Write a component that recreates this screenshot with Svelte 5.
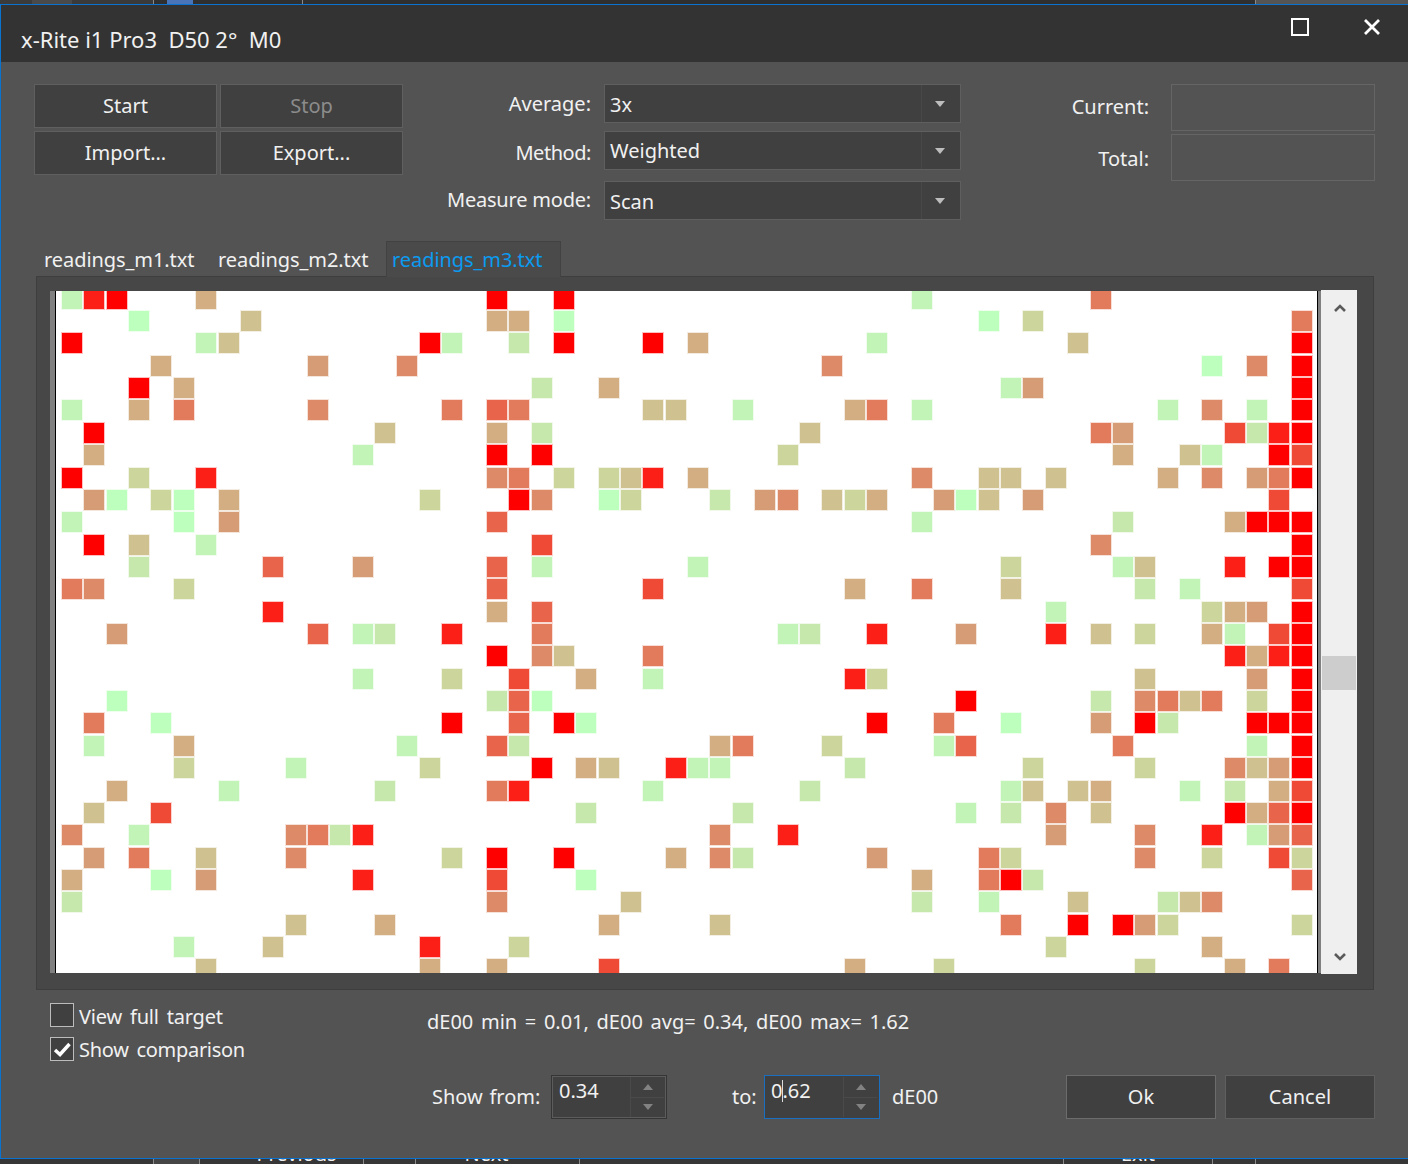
<script>
  const data = [
    "0L 1S 2R 6T 19R 22R 38L 46O",
    "3B 8K 19T 20T 22B 41B 43G 55O",
    "0R 6L 7K 16R 17L 20H 22R 26R 28T 36L 45K 55R",
    "4T 11D 15P 34P 51B 53P 55R",
    "3R 5T 21H 24T 42L 43D 55R",
    "0L 3T 5O 11P 17O 19F 20O 26K 27K 30L 35T 36O 38L 49L 51P 53L 55R",
    "1R 14K 19T 21H 33K 46O 47D 52E 53H 54S 55R",
    "1T 13L 19R 21R 32G 47T 50K 51L 54R 55E",
    "0R 3G 6S 19P 20O 22G 24G 25K 26S 28T 38P 41K 42K 44K 49T 51P 53D 54O 55R",
    "1D 2B 4G 5B 7T 16G 20R 21P 24B 25G 29H 31D 32P 34K 35G 36T 39D 40B 41K 43D 54E",
    "0L 5B 7D 19F 38L 47H 52T 53R 54R 55R",
    "1R 3K 6L 21E 46P 55R",
    "3H 9F 13D 19F 21L 28L 42G 47L 48K 52S 54R 55R",
    "0O 1P 5G 19F 26E 35T 38O 42K 48H 50L 55E",
    "9S 19T 21F 44L 51G 52T 53D 55R",
    "2D 11F 13L 14H 17S 21O 32L 33H 36S 40D 44S 46K 48G 51T 52L 54E 55R",
    "19R 21P 22K 26O 52S 53T 54S 55R",
    "13L 17G 20E 23T 26L 35S 36G 48K 53D 55R",
    "2B 19H 20F 21B 40R 46H 48P 49O 50K 51O 53G 55R",
    "1O 4B 17R 20F 22R 23B 36R 39O 42B 46D 48R 49H 53R 54R 55R",
    "1L 5T 15L 19F 20H 29T 30O 34G 39L 40F 47O 53L 55R",
    "5G 10L 16G 21R 23T 24K 27S 28L 29L 35H 43G 48G 52P 53K 54D 55R",
    "2T 7L 14H 19O 20S 26L 33H 42L 43K 45K 46T 50L 52H 54T 55E",
    "1K 4E 23H 30H 40L 42H 44P 46K 52R 53T 54F 55R",
    "0P 3L 10P 11O 12H 13S 29P 32S 44D 48P 51S 53L 54D 55F",
    "1D 3O 6K 10P 17G 19R 22R 27T 29P 30H 36D 41O 42G 48P 51G 54E 55G",
    "0T 4B 6D 13S 19E 23B 38T 41O 42R 43H 55F",
    "0H 19P 25K 38H 41L 45K 49H 50K 51P",
    "10K 14T 24T 29K 42O 45R 47R 48D 49G 55G",
    "5L 9K 16S 20G 44G 51T",
    "6K 16T 19T 24E 35T 39G 48G 52T 54O"
  ];
  const cells = data.flatMap((row, r) =>
    row.split(" ").map((t) => ({ r: r + 1, c: parseInt(t) + 1, k: t.slice(-1) }))
  );
</script>

<div class="screen">
  <div class="strip top-strip">
    <i class="a"></i><i class="b"></i><i class="c"></i><i class="sep"></i><i class="d"></i><i class="blue"></i><i class="e"></i><i class="sep"></i><i class="f"></i><i class="sep"></i><i class="g"></i>
  </div>

  <div class="dialog">
    <header class="title">
      <span class="title-text">x-Rite i1 Pro3&nbsp; D50 2°&nbsp; M0</span>
      <svg class="win max" width="18" height="18" viewBox="0 0 18 18"><rect x="1" y="1" width="16" height="16" fill="none" stroke="#fff" stroke-width="2"/></svg>
      <svg class="win close" width="16" height="16" viewBox="0 0 16 16"><path d="M1 1L15 15M15 1L1 15" stroke="#fff" stroke-width="2.8" fill="none"/></svg>
    </header>

    <section class="top">
      <div class="btns">
        <button>Start</button>
        <button class="off">Stop</button>
        <button>Import...</button>
        <button>Export...</button>
      </div>
      <div class="fields">
        <label class="f1">Average:</label>
        <div class="combo f1"><span class="low">3x</span><b class="drop"><em></em></b></div>
        <label class="f2">Method:</label>
        <div class="combo f2"><span>Weighted</span><b class="drop"><em></em></b></div>
        <label class="f3">Measure mode:</label>
        <div class="combo f3"><span class="low">Scan</span><b class="drop"><em></em></b></div>
      </div>
      <div class="readouts">
        <label class="cur">Current:</label><div class="box"></div>
        <label class="tot">Total:</label><div class="box"></div>
      </div>
    </section>

    <nav class="tabs">
      <span class="tab">readings_m1.txt</span>
      <span class="tab">readings_m2.txt</span>
      <span class="tab active">readings_m3.txt</span>
    </nav>

    <section class="pane">
      <div class="gutter"></div>
      <div class="plot">
        {#each cells as cell}
          <div class="cell {cell.k}" style="grid-row:{cell.r};grid-column:{cell.c}"></div>
        {/each}
      </div>
      <div class="gutter right"></div>
      <div class="scroll">
        <svg class="chev" width="12" height="8" viewBox="0 0 12 8"><path d="M1 7L6 2L11 7" fill="none" stroke="#5a5a5a" stroke-width="2.6"/></svg>
        <div class="thumb"></div>
        <svg class="chev" width="12" height="8" viewBox="0 0 12 8"><path d="M1 1L6 6L11 1" fill="none" stroke="#5a5a5a" stroke-width="2.6"/></svg>
      </div>
    </section>

    <section class="footer">
      <div class="checks">
        <div class="check"><span class="tick"></span><span class="ck first">View full target</span></div>
        <div class="check"><span class="tick"><svg width="22" height="22" viewBox="0 0 22 22"><path d="M4 12L9 16.5L18.5 6" fill="none" stroke="#fff" stroke-width="3.4"/></svg></span><span class="ck">Show comparison</span></div>
      </div>
      <div class="right-col">
        <div class="stats">dE00 min = 0.01, dE00 avg= 0.34, dE00 max= 1.62</div>
        <div class="controls">
          <span class="show">Show from:</span>
          <div class="spin"><span class="val">0.34</span><div class="updown"><b><em class="up"></em></b><b><em class="dn"></em></b></div></div>
          <span class="to">to:</span>
          <div class="spin focus"><span class="val">0<i class="caret"></i>.62</span><div class="updown"><b><em class="up"></em></b><b><em class="dn"></em></b></div></div>
          <span class="unit">dE00</span>
          <button class="act ok">Ok</button>
          <button class="act">Cancel</button>
        </div>
      </div>
    </section>
  </div>

  <div class="strip bottom-strip">
    <i class="s1"></i><i class="sep"></i><i class="s2"></i><i class="sep"></i>
    <span class="prev">Previous</span><i class="sep"></i><i class="s3"></i><i class="sep"></i>
    <span class="next">Next</span><i class="sep"></i><i class="s4"></i><i class="sep"></i>
    <span class="exit">Exit</span><i class="sep"></i><i class="s5"></i><i class="sep"></i>
  </div>
</div>

<style>
  :global(body) { margin: 0; background: #333; }
  .screen {
    width: 1408px; height: 1164px; display: flex; flex-direction: column; overflow: hidden;
    font-family: "Noto Sans", "Open Sans", sans-serif; font-size: 20px; color: #f1f1f1;
  }
  .strip { display: flex; flex: none; overflow: hidden; background: #2f2f2f; }
  .strip i { display: block; flex: none; }
  .strip .sep { width: 1px; background: #8a8a8a; }
  .top-strip { height: 4px; }
  .a { width: 32px; background: #3b3b3b; }
  .b { width: 40px; background: #4a4a4a; }
  .c { width: 81px; background: #3a3a3a; }
  .d { width: 13px; }
  .blue { width: 26px; background: #4a74b8; }
  .e { width: 109px; }
  .f { width: 952px; }
  .g { width: 152px; background: #555; }

  .dialog {
    flex: 1; min-height: 0; display: flex; flex-direction: column; background: #535353;
    border-top: 1px solid #0a72d0; border-bottom: 1px solid #0a72d0; border-left: 1px solid #0a72d0;
  }
  .title { height: 57px; flex: none; background: #333; position: relative; display: flex; align-items: flex-end; padding: 0 0 9px 20px; box-sizing: border-box; }
  .title-text { font-size: 22px; line-height: 28px; }
  .win { position: absolute; }
  .max { left: 1290px; top: 13px; }
  .close { left: 1363px; top: 14px; }

  .top { display: flex; padding: 22px 0 0 33px; height: 158px; box-sizing: border-box; flex: none; }
  button {
    font: inherit; color: inherit; background: #404040; border: 1px solid #5f5f5f; padding: 0 0 2px; margin: 0;
  }
  .btns { display: grid; grid-template-columns: 183px 183px; grid-auto-rows: 44px; gap: 3px; height: 91px; }
  .off { color: #8c8c8c; }
  .fields { display: grid; grid-template-columns: 188px 357px; column-gap: 13px; grid-template-rows: 39px 39px 39px; row-gap: 0; align-content: start; }
  .fields label { text-align: right; line-height: 39px; }
  .f2 { margin-top: 8px; }
  .f3 { margin-top: 19px; }
  label.f2 { margin-top: 10px; letter-spacing: -0.45px; }
  label.f3 { margin-top: 18px; letter-spacing: -0.2px; }
  .combo { display: flex; align-items: center; justify-content: space-between; background: #404040; border: 1px solid #5f5f5f; box-sizing: border-box; height: 39px; padding-left: 5px; }
  .low { padding-top: 2px; }
  .drop { width: 39px; height: 100%; display: flex; align-items: center; justify-content: center; border-left: 1px solid #484848; box-sizing: border-box; padding-right: 2px; }
  .drop em { width: 0; height: 0; border: 5px solid transparent; border-top: 6px solid #bdbdbd; border-bottom: 0; }
  .readouts { display: grid; grid-template-columns: 188px 204px; column-gap: 22px; grid-auto-rows: 47px; row-gap: 3px; align-content: start; }
  .readouts label { text-align: right; }
  .cur { line-height: 45px; }
  .tot { line-height: 49px; }
  .box { border: 1px solid #656565; box-sizing: border-box; }

  .tabs { display: flex; height: 36px; flex: none; padding: 21px 0 0 35px; margin-bottom: -1px; position: relative; box-sizing: content-box; }
  .tab { width: 174px; padding-left: 8px; box-sizing: border-box; line-height: 38px; letter-spacing: -0.07px; }
  .tab.active { width: 175px; padding-left: 5px; margin-left: 2px; color: #0a9bf0; background: #4a4a4a; border: 1px solid #424242; border-bottom: 0; line-height: 35px; }

  .pane {
    flex: none; width: 1338px; height: 714px; margin-left: 35px; box-sizing: border-box;
    background: #474747; border: 1px solid #3e3e3e; display: flex; padding: 14px 16px 16px 13px; align-items: flex-start;
  }
  .gutter { width: 5px; height: 682px; background: #808080; border-right: 1px solid #000; flex: none; }
  .gutter.right { width: 2.5px; border-right: 0; border-left: 1.5px solid #000; }
  .plot {
    width: 1261px; height: 682px; flex: none; background: #fff; overflow: hidden;
    display: grid; grid-template-columns: repeat(56, 22.37px); grid-template-rows: repeat(31, 22.37px);
    padding-left: 6px; box-sizing: border-box; align-content: start;
  }
  .cell { width: 20px; height: 20px; margin-top: -2.37px; background: var(--c); box-shadow: 0 0 0 1px color-mix(in srgb, var(--c) 25%, transparent); }
  .R { --c: #ff0000; } .S { --c: #fb1f17; } .E { --c: #ef4a36; } .F { --c: #e8644b; }
  .O { --c: #e27a5c; } .P { --c: #dd8a68; } .D { --c: #d69c75; } .T { --c: #d3ae82; }
  .K { --c: #cfc190; } .G { --c: #cbd59c; } .H { --c: #c7e8ac; } .L { --c: #c3f4b7; } .B { --c: #bdffbd; }

  .scroll { width: 36px; height: 684px; margin-top: -1px; background: #efefef; flex: none; position: relative; }
  .chev { position: absolute; left: 13px; }
  .chev:first-child { top: 14px; }
  .chev:last-child { bottom: 13px; }
  .thumb { position: absolute; left: 1px; right: 1px; top: 366px; height: 34px; background: #cdcdcd; }

  .footer { flex: 1; display: flex; padding: 13px 33px 0 49px; }
  .checks { width: 377px; flex: none; display: flex; flex-direction: column; gap: 10px; }
  .check { display: flex; align-items: center; height: 24px; gap: 5px; }
  .ck { letter-spacing: -0.3px; word-spacing: 3px; }
  .ck.first { padding-top: 2px; letter-spacing: -0.2px; }
  .tick { width: 24px; height: 24px; box-sizing: border-box; border: 1px solid #bcbcbc; background: #404040; display: block; }
  .tick svg { display: block; }
  .right-col { flex: 1; display: flex; flex-direction: column; }
  .stats { height: 38px; line-height: 38px; margin-bottom: 34px; word-spacing: 2.44px; }
  .controls { display: flex; align-items: center; height: 44px; }
  .show { margin-left: 5px; width: 108px; word-spacing: 1.5px; padding-bottom: 2px; white-space: nowrap; flex: none; }
  .to, .unit { padding-bottom: 2px; }
  .spin { width: 116px; height: 44px; box-sizing: border-box; margin-left: 11px; background: #404040; border: 1px solid #353535; box-shadow: inset 0 0 0 1px #5c5c5c; display: flex; justify-content: space-between; padding: 1px 2px 1px 1px; flex: none; }
  .spin.focus { border: 1px solid #1a6fc0; box-shadow: none; margin-left: 8px; }
  .val { padding: 0 0 0 6px; line-height: 28px; }
  .focus .val { padding-left: 5px; }
  .caret { display: inline-block; width: 1px; height: 22px; background: #ddd; vertical-align: -4px; margin-right: -1px; }
  .updown { width: 33px; display: flex; flex-direction: column; border-left: 1px solid #4a4a4a; }
  .updown b { flex: 1; display: flex; align-items: center; justify-content: center; }
  .updown b:first-child { border-bottom: 1px solid #4a4a4a; }
  .up, .dn { width: 0; height: 0; border: 5px solid transparent; }
  .up { border-bottom: 6px solid #828282; border-top: 0; }
  .dn { border-top: 6px solid #828282; border-bottom: 0; }
  .to { margin-left: 65px; width: 24px; flex: none; }
  .unit { margin-left: 12px; width: 46px; flex: none; }
  .act { width: 150px; height: 44px; flex: none; border-color: #5f5f5f; margin-left: 9px; }
  .ok { margin-left: auto; border-color: #6c6c6c; }

  .bottom-strip { height: 5px; background: #363636; font-size: 20px; line-height: 14px; }
  .bottom-strip span { flex: none; text-align: center; margin-top: -12px; height: 20px; box-sizing: border-box; }
  .s1 { width: 153px; }
  .s2 { width: 45px; background: #454545; }
  .prev { width: 163px; padding-left: 30px; }
  .s3 { width: 51px; }
  .next { width: 163px; padding-right: 22px; }
  .s4 { width: 483px; }
  .exit { width: 148px; }
  .s5 { width: 42px; }
</style>
